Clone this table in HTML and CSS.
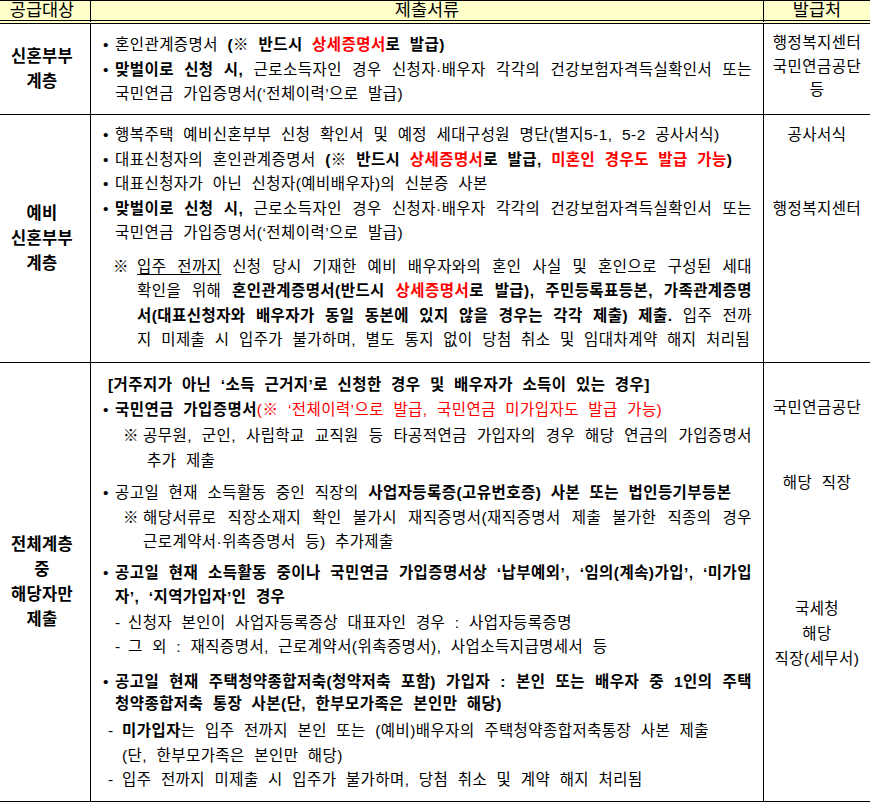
FILE: index.html
```html
<!DOCTYPE html>
<html lang="ko">
<head>
<meta charset="utf-8">
<title>제출서류</title>
<link rel="stylesheet" href="styles.css">
</head>
<body>
<div class="sheet">
  <div class="hd c1">공급대상</div>
  <div class="hd c2">제출서류</div>
  <div class="hd c3">발급처</div>

  <div class="cell c1 grp"><span>신혼부부</span><span>계층</span></div>
  <div class="cell c2 body r1">
    <div class="item"><span class="mk">•</span><div class="tx"><span class="ln">혼인관계증명서 <b>(※ 반드시 <em class="red">상세증명서</em>로 발급)</b></span></div></div>
    <div class="item"><span class="mk">•</span><div class="tx"><span class="ln j"><b>맞벌이로 신청 시,</b> 근로소득자인 경우 신청자·배우자 각각의 건강보험자격득실확인서 또는</span><span class="ln">국민연금 가입증명서(‘전체이력’으로 발급)</span></div></div>
  </div>
  <div class="cell c3 issuer r1">
    <span class="ln">행정복지센터</span><span class="ln">국민연금공단</span><span class="ln">등</span>
  </div>

  <div class="cell c1 grp"><span>예비</span><span>신혼부부</span><span>계층</span></div>
  <div class="cell c2 body r2">
    <div class="item"><span class="mk">•</span><div class="tx"><span class="ln">행복주택 예비신혼부부 신청 확인서 및 예정 세대구성원 명단(별지5-1, 5-2 공사서식)</span></div></div>
    <div class="item"><span class="mk">•</span><div class="tx"><span class="ln">대표신청자의 혼인관계증명서 <b>(※ 반드시 <em class="red">상세증명서</em>로 발급, <em class="red">미혼인 경우도 발급 가능</em>)</b></span></div></div>
    <div class="item"><span class="mk">•</span><div class="tx"><span class="ln">대표신청자가 아닌 신청자(예비배우자)의 신분증 사본</span></div></div>
    <div class="item"><span class="mk">•</span><div class="tx"><span class="ln j"><b>맞벌이로 신청 시,</b> 근로소득자인 경우 신청자·배우자 각각의 건강보험자격득실확인서 또는</span><span class="ln">국민연금 가입증명서(‘전체이력’으로 발급)</span></div></div>
    <div class="item note"><span class="mk">※</span><div class="tx">
      <span class="ln j"><u>입주 전까지</u> 신청 당시 기재한 예비 배우자와의 혼인 사실 및 혼인으로 구성된 세대</span>
      <span class="ln j">확인을 위해 <b>혼인관계증명서(반드시 <em class="red">상세증명서</em>로 발급), 주민등록표등본, 가족관계증명</b></span>
      <span class="ln j"><b>서(대표신청자와 배우자가 동일 동본에 있지 않을 경우는 각각 제출) 제출.</b> 입주 전까</span>
      <span class="ln">지 미제출 시 입주가 불가하며, 별도 통지 없이 당첨 취소 및 임대차계약 해지 처리됨</span>
    </div></div>
  </div>
  <div class="cell c3 issuer r2">
    <span class="ln">공사서식</span><span class="ln gap2">행정복지센터</span>
  </div>

  <div class="cell c1 grp"><span>전체계층</span><span>중</span><span>해당자만</span><span>제출</span></div>
  <div class="cell c2 body r3">
    <div class="lead"><b>[거주지가 아닌 ‘소득 근거지’로 신청한 경우 및 배우자가 소득이 있는 경우]</b></div>
    <div class="item"><span class="mk">•</span><div class="tx"><span class="ln"><b>국민연금 가입증명서</b><em class="red">(※ ‘전체이력’으로 발급, 국민연금 미가입자도 발급 가능)</em></span></div></div>
    <div class="item sub n1"><span class="mk">※</span><div class="tx"><span class="ln j">공무원, 군인, 사립학교 교직원 등 타공적연금 가입자의 경우 해당 연금의 가입증명서</span><span class="ln in4">추가 제출</span></div></div>
    <div class="item b2"><span class="mk">•</span><div class="tx"><span class="ln">공고일 현재 소득활동 중인 직장의 <b>사업자등록증(고유번호증) 사본 또는 법인등기부등본</b></span></div></div>
    <div class="item sub"><span class="mk">※</span><div class="tx"><span class="ln j">해당서류로 직장소재지 확인 불가시 재직증명서(재직증명서 제출 불가한 직종의 경우</span><span class="ln">근로계약서·위촉증명서 등) 추가제출</span></div></div>
    <div class="item b3"><span class="mk">•</span><div class="tx"><span class="ln j"><b>공고일 현재 소득활동 중이나 국민연금 가입증명서상 ‘납부예외’, ‘임의(계속)가입’, ‘미가입</b></span><span class="ln"><b>자’, ‘지역가입자’인 경우</b></span></div></div>
    <div class="item dash d1"><span class="mk">-</span><div class="tx"><span class="ln">신청자 본인이 사업자등록증상 대표자인 경우 : 사업자등록증명</span></div></div>
    <div class="item dash"><span class="mk">-</span><div class="tx"><span class="ln">그 외 : 재직증명서, 근로계약서(위촉증명서), 사업소득지급명세서 등</span></div></div>
    <div class="item b4"><span class="mk">•</span><div class="tx"><span class="ln j"><b>공고일 현재 주택청약종합저축(청약저축 포함) 가입자 : 본인 또는 배우자 중 1인의 주택</b></span><span class="ln"><b>청약종합저축 통장 사본(단, 한부모가족은 본인만 해당)</b></span></div></div>
    <div class="item dash2 d3"><span class="mk">-</span><div class="tx"><span class="ln"><b>미가입자</b>는 입주 전까지 본인 또는 (예비)배우자의 주택청약종합저축통장 사본 제출</span><span class="ln">(단, 한부모가족은 본인만 해당)</span></div></div>
    <div class="item dash2"><span class="mk">-</span><div class="tx"><span class="ln">입주 전까지 미제출 시 입주가 불가하며, 당첨 취소 및 계약 해지 처리됨</span></div></div>
  </div>
  <div class="cell c3 issuer r3">
    <span class="ln">국민연금공단</span>
    <span class="ln s2">해당 직장</span>
    <div class="s3"><span class="ln">국세청</span><span class="ln">해당</span><span class="ln">직장(세무서)</span></div>
  </div>
</div>
</body>
</html>
```
FILE: styles.css
```css
* { box-sizing: border-box; }

body {
  margin: 0;
  background: #fff;
  color: #000;
  font-family: "Liberation Sans", "Noto Sans CJK KR", sans-serif;
  font-size: 15.5px;
  letter-spacing: 0.45px;
  word-spacing: 4.7px;
}

.sheet {
  display: grid;
  grid-template-columns: 91px 673px 106px;
  grid-template-rows: 23px 91px 248px 439px;
  width: 870px;
  border-top: 1px solid #000;
}

.cell { border-bottom: 1px solid #000; }
.c1, .c2 { border-right: 1px solid #000; }

.hd {
  background: #ffffcc;
  border-bottom: 4px double #000;
  font-size: 17.5px;
  letter-spacing: 0;
  line-height: 19px;
  text-align: center;
  white-space: nowrap;
}
.hd.c1 { padding-right: 6px; }

.grp {
  display: flex;
  flex-direction: column;
  justify-content: center;
  align-items: center;
  font-weight: 700;
  font-size: 16.5px;
  letter-spacing: 0.3px;
  line-height: 25px;
  padding-right: 6px;
}

.body {
  padding: 0 11px 0 12px;
  line-height: 24.5px;
}
.r1.body { padding-top: 9px; }
.r2.body { padding-top: 8px; }
.r3.body { padding-top: 10px; }

.ln { display: block; white-space: nowrap; }
.lead { white-space: nowrap; }
.j { white-space: normal; text-align: justify; text-align-last: justify; word-spacing: 0; }

b { font-weight: 700; }
em { font-style: normal; }
.red { color: #ff0000; }
u { text-decoration: underline; text-underline-offset: 2px; }

.item { display: flex; }
.item .mk { flex: none; width: 12px; }
.item .tx { flex: 1; min-width: 0; }

.note { margin-left: 10px; margin-top: 9px; }
.note .mk { width: 24px; }

.lead { margin-left: 5px; }

.sub { margin-left: 20px; }
.sub .mk { width: 20px; }
.n1 { margin-top: 2px; }
.in4 { padding-left: 4px; }

.b2 { margin-top: 8px; }
.b3 { margin-top: 6px; }
.b4 { margin-top: 11.5px; line-height: 22px; }

.dash { margin-left: 12px; }
.dash .mk { width: 13px; }
.d1 { margin-top: 1px; }

.dash2 { margin-left: 5px; }
.dash2 .mk { width: 14px; }
.d3 { margin-top: 4px; }

.issuer {
  text-align: center;
  white-space: nowrap;
}
.r1.issuer { padding-top: 7.25px; line-height: 23.5px; }
.r2.issuer { padding-top: 8px; line-height: 24.5px; }
.gap2 { margin-top: 49px; }
.r3.issuer { padding-top: 32.75px; line-height: 24.5px; }
.s2 { margin-top: 50.5px; }
.s3 { margin-top: 100.25px; line-height: 25px; }
```
